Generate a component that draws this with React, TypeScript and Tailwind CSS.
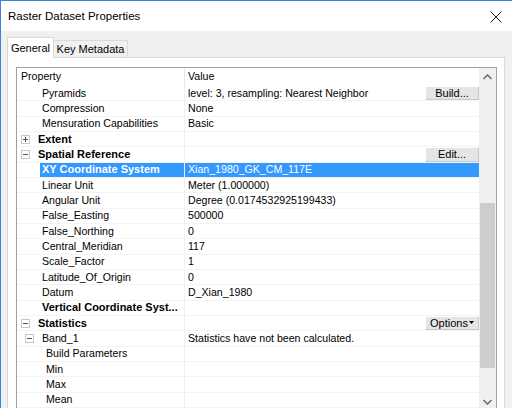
import React from "react";

type Row = {
  label: string;
  value?: string;
  level: "head" | "cat" | "l1" | "l2";
  bold?: boolean;
  expander?: "plus" | "minus";
  expLeft?: number;
  button?: string;
  selected?: boolean;
};

const rows: Row[] = [
  { label: "Pyramids", value: "level: 3, resampling: Nearest Neighbor", level: "l1", button: "Build..." },
  { label: "Compression", value: "None", level: "l1" },
  { label: "Mensuration Capabilities", value: "Basic", level: "l1" },
  { label: "Extent", level: "cat", bold: true, expander: "plus" },
  { label: "Spatial Reference", level: "cat", bold: true, expander: "minus", button: "Edit..." },
  { label: "XY Coordinate System", value: "Xian_1980_GK_CM_117E", level: "l1", bold: true, selected: true },
  { label: "Linear Unit", value: "Meter (1.000000)", level: "l1" },
  { label: "Angular Unit", value: "Degree (0.0174532925199433)", level: "l1" },
  { label: "False_Easting", value: "500000", level: "l1" },
  { label: "False_Northing", value: "0", level: "l1" },
  { label: "Central_Meridian", value: "117", level: "l1" },
  { label: "Scale_Factor", value: "1", level: "l1" },
  { label: "Latitude_Of_Origin", value: "0", level: "l1" },
  { label: "Datum", value: "D_Xian_1980", level: "l1" },
  { label: "Vertical Coordinate Syst...", level: "l1", bold: true },
  { label: "Statistics", level: "cat", bold: true, expander: "minus", button: "Options" },
  { label: "Band_1", value: "Statistics have not been calculated.", level: "l1", expander: "minus", expLeft: 8 },
  { label: "Build Parameters", level: "l2" },
  { label: "Min", level: "l2" },
  { label: "Max", level: "l2" },
  { label: "Mean", level: "l2" },
];

function Expander({ kind }: { kind: "plus" | "minus" }) {
  return (
    <svg width="9" height="9" viewBox="0 0 9 9" className="shrink-0">
      <rect x="0.5" y="0.5" width="8" height="8" fill="#fff" stroke="#c8c8c8" />
      <line x1="2" y1="4.5" x2="7" y2="4.5" stroke="#505050" />
      {kind === "plus" && <line x1="4.5" y1="2" x2="4.5" y2="7" stroke="#505050" />}
    </svg>
  );
}

function GridRow({ r }: { r: Row }) {
  const pad = r.level === "cat" ? "pl-[21px]" : r.level === "l1" ? "pl-[25px]" : "pl-[29px]";
  return (
    <div className="flex h-[15.33px] text-[10.6px] leading-[15px] text-black">
      <div className="relative w-[168px] shrink-0 border-r border-[#f0f0f0] flex items-center border-b border-b-[#f4f4f4]">
        {r.expander && (
          <div className="absolute top-[3px]" style={{ left: r.expLeft ?? 4 }}>
            <Expander kind={r.expander} />
          </div>
        )}
        <div className={`${pad} h-full flex items-center`}>
          <span
            className={`${r.selected ? "bg-[#3399ff] text-white -ml-[2px] pl-[2px] pr-[24px]" : ""} ${r.bold ? "font-bold text-[11px]" : ""} whitespace-nowrap h-full flex items-center`}
          >
            {r.label}
          </span>
        </div>
      </div>
      <div
        className={`flex-1 flex items-center justify-between pl-[3px] border-b border-[#f4f4f4] ${r.selected ? "bg-[#3399ff] text-white" : ""}`}
      >
        <span className="whitespace-nowrap">{r.value ?? ""}</span>
        {r.button && (
          <div className="h-full w-[54px] bg-[#e5e5e5] border-t border-l border-white border-r border-b border-r-[#c8c8c8] border-b-[#c8c8c8] flex items-center justify-center text-[11px] text-black">
            {r.button}
            {r.button === "Options" && (
              <svg width="5" height="3" viewBox="0 0 5 3" className="ml-[1px] mt-[-2px]">
                <path d="M0 0 H5 L2.5 3 Z" fill="#000" />
              </svg>
            )}
          </div>
        )}
      </div>
    </div>
  );
}

export default function App() {
  return (
    <div className="w-[512px] h-[408px] overflow-hidden bg-[#f0f0f0] border-t border-l border-[#3a86d4] flex flex-col font-['Liberation_Sans',Arial,sans-serif]">
      <div className="h-[30px] shrink-0 bg-white flex items-center justify-between pl-[7px] pr-[10px] pt-[1px]">
        <span className="text-[11.5px] text-black">Raster Dataset Properties</span>
        <svg width="12" height="12" viewBox="0 0 12 12">
          <path d="M0.5 0.5 L11.5 11.5 M11.5 0.5 L0.5 11.5" stroke="#222" strokeWidth="1" />
        </svg>
      </div>
      <div className="flex-1 pl-[6px] pr-[7px] pt-[6px] flex flex-col">
        <div className="flex items-end h-[20px] relative z-10">
          <div className="h-[21px] w-[47px] bg-white border border-b-0 border-[#d9d9d9] flex items-center justify-center text-[11px] text-black -mb-px">
            General
          </div>
          <div className="h-[17px] w-[74px] bg-[#f0f0f0] border border-l-0 border-b-0 border-[#d9d9d9] flex items-center justify-center text-[11px] text-black">
            Key Metadata
          </div>
        </div>
        <div className="flex-1 bg-white border border-[#d9d9d9] pl-[8px] pr-[7px] pt-[9px]">
          <div className="h-[344px] border border-[#a0a0a0] flex">
            <div className="flex-1 flex flex-col">
              <div className="flex h-[18px] shrink-0 text-[10.6px] text-black">
                <div className="w-[168px] shrink-0 border-r border-[#e8e8e8] pl-[4px] flex items-center">Property</div>
                <div className="flex-1 pl-[3px] flex items-center">Value</div>
              </div>
              {rows.map((r, i) => (
                <GridRow key={i} r={r} />
              ))}
            </div>
            <div className="w-[17px] shrink-0 bg-[#f0f0f0] flex flex-col">
              <div className="h-[17px] flex items-center justify-center">
                <svg width="9" height="6" viewBox="0 0 9 6">
                  <path d="M0.5 5 L4.5 1 L8.5 5" fill="none" stroke="#606060" strokeWidth="1.3" />
                </svg>
              </div>
              <div className="flex-1">
                <div className="mt-[118px] h-[165px] mx-[1px] bg-[#cdcdcd]" />
              </div>
              <div className="h-[17px] flex items-center justify-center">
                <svg width="9" height="6" viewBox="0 0 9 6">
                  <path d="M0.5 1 L4.5 5 L8.5 1" fill="none" stroke="#606060" strokeWidth="1.3" />
                </svg>
              </div>
            </div>
          </div>
        </div>
      </div>
    </div>
  );
}
